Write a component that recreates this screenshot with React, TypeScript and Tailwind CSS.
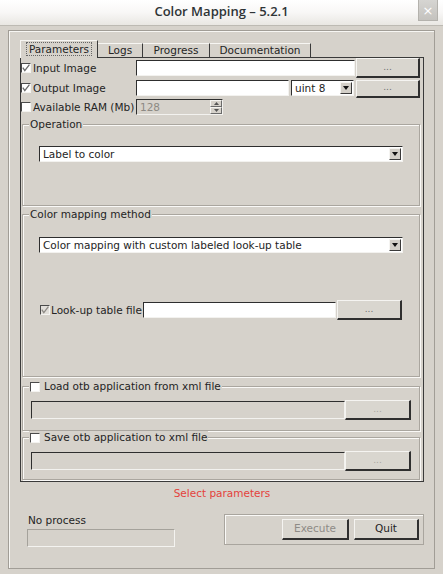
import React from "react";

type Kids = { children?: React.ReactNode; className?: string };

const Check = ({ checked = false, dim = false }: { checked?: boolean; dim?: boolean }) => (
  <span
    className={`flex h-[10px] w-[10px] shrink-0 items-center justify-center border border-b-[#f4f3f0] border-l-[#4a4a4a] border-r-[#f4f3f0] border-t-[#4a4a4a] ${
      dim ? "bg-[#e2dfda]" : "bg-white"
    }`}
  >
    {checked && (
      <svg width="8" height="8" viewBox="0 0 8 8">
        <path
          d="M0.8 3.6 L2.8 6.6 L7.4 0.6"
          fill="none"
          stroke={dim ? "#8f8c87" : "#6a6a6a"}
          strokeWidth="1.3"
        />
      </svg>
    )}
  </span>
);

const Field = ({ className = "", disabled = false }: { className?: string; disabled?: boolean }) => (
  <div
    className={`shrink-0 border border-b-[#f3f2ef] border-l-[#2e2e2e] border-r-[#f3f2ef] border-t-[#2e2e2e] ${
      disabled ? "bg-[#d6d2cb]" : "bg-white"
    } ${className}`}
  />
);

const Btn = ({ label, className = "", muted = false }: { label: string; className?: string; muted?: boolean }) => (
  <div
    className={`flex shrink-0 items-center justify-center border-b-2 border-l border-r-2 border-t border-b-[#2f2f2f] border-l-[#f5f4f1] border-r-[#2f2f2f] border-t-[#f5f4f1] bg-[#d9d6cf] ${
      muted ? "text-[#8e8b86]" : "text-[#1f1f1f]"
    } ${className}`}
  >
    {label}
  </div>
);

const Dots = ({ className = "", faint = false }: { className?: string; faint?: boolean }) => (
  <div
    className={`flex shrink-0 items-end justify-center border-b-2 border-l border-r-2 border-t border-b-[#2f2f2f] border-l-[#f5f4f1] border-r-[#2f2f2f] border-t-[#f5f4f1] bg-[#d9d6cf] pb-[4px] text-[9px] leading-[9px] ${
      faint ? "text-[#a9a6a0]" : "text-[#6f6f6f]"
    } ${className}`}
  >
    ...
  </div>
);

const Arrow = () => (
  <span className="flex h-[12px] w-[12px] shrink-0 items-center justify-center border border-b-[#3a3a3a] border-l-[#f5f4f1] border-r-[#3a3a3a] border-t-[#f5f4f1] bg-[#d3cfc8]">
    <svg width="6" height="4" viewBox="0 0 6 4">
      <path d="M0 0 H6 L3 4 Z" fill="#111" />
    </svg>
  </span>
);

const Select = ({ value, className = "" }: { value: string; className?: string }) => (
  <div
    className={`flex shrink-0 items-center border border-b-[#f3f2ef] border-l-[#2e2e2e] border-r-[#f3f2ef] border-t-[#2e2e2e] bg-white pl-[3px] pr-[1px] ${className}`}
  >
    <span className="flex-1 truncate leading-[13px]">{value}</span>
    <Arrow />
  </div>
);

const Group = ({ title, className = "", children }: Kids & { title: React.ReactNode }) => (
  <div
    className={`relative shrink-0 border border-[#aaa69f] shadow-[inset_1px_1px_0_#faf9f7,1px_1px_0_#faf9f7] ${className}`}
  >
    <div className="absolute -top-[7px] left-[6px] flex items-center gap-[4px] bg-[#d6d2cb] px-[1px] leading-[13px]">
      {title}
    </div>
    {children}
  </div>
);

const Label = ({ children, className = "" }: Kids) => (
  <span className={`whitespace-nowrap leading-[13px] ${className}`}>{children}</span>
);

export default function App() {
  return (
    <div className="flex h-[574px] w-[443px] flex-col overflow-hidden bg-[#d6d2cb] font-['DejaVu_Sans',sans-serif] text-[10.5px] text-[#242424]">
      {/* title bar */}
      <div className="flex h-[26px] shrink-0 items-start border-b border-[#bdbab3] bg-gradient-to-b from-white via-[#f8f7f6] to-[#e9e7e3]">
        <div className="w-[25px]" />
        <div className="flex h-[24px] flex-1 items-center justify-center font-['Open_Sans',sans-serif] text-[13px] font-semibold text-[#2e3436]">
          Color Mapping – 5.2.1
        </div>
        <div className="mr-[5px] flex h-[21px] w-[20px] items-center justify-center border border-t-0 border-[#b4b2ad] bg-gradient-to-b from-[#d6d5d2] to-[#c4c2be] text-[13px] leading-none text-white">
          ×
        </div>
      </div>

      {/* window frame */}
      <div className="ml-[8px] mt-[4px] flex h-[539px] w-[427px] flex-col border border-[#a19d96] pl-[11px] pr-[10px] pt-[9px] shadow-[inset_1px_1px_0_#f7f6f3]">
        {/* tabs */}
        <div className="relative z-10 -mb-px flex h-[18px] items-end">
          <div className="flex h-[18px] w-[78px] items-center justify-center border-l border-r border-t border-l-[#f7f6f3] border-r-[#3a3a3a] border-t-[#f7f6f3] bg-[#d6d2cb] pb-px">
            <span className="px-[2px] leading-[12px] outline-1 outline-dotted outline-[#666]">Parameters</span>
          </div>
          <div className="flex h-[15px] w-[45px] items-center justify-center border-r border-t border-r-[#3a3a3a] border-t-[#f7f6f3]">
            Logs
          </div>
          <div className="flex h-[15px] w-[67px] items-center justify-center border-r border-t border-r-[#3a3a3a] border-t-[#f7f6f3]">
            Progress
          </div>
          <div className="flex h-[15px] w-[101px] items-center justify-center border-r border-t border-r-[#3a3a3a] border-t-[#f7f6f3]">
            Documentation
          </div>
        </div>

        {/* tab pane */}
        <div className="flex h-[425px] w-[404px] flex-col border border-[#3a3a3a]">
          <div className="flex h-[20px] items-center">
            <div className="flex w-[115px] items-center gap-[2px]">
              <Check checked />
              <Label>Input Image</Label>
            </div>
            <Field className="h-[16px] w-[219px]" />
            <Dots className="ml-[1px] h-[20px] w-[64px]" />
          </div>

          <div className="mt-[2px] flex h-[18px] items-start">
            <div className="flex h-[16px] w-[115px] items-center gap-[2px]">
              <Check checked />
              <Label>Output Image</Label>
            </div>
            <Field className="h-[16px] w-[153px]" />
            <Select value="uint 8" className="ml-[2px] h-[16px] w-[63px]" />
            <Dots className="ml-[2px] h-[18px] w-[64px]" />
          </div>

          <div className="mt-[1px] flex h-[16px] items-center">
            <div className="flex w-[115px] items-center gap-[2px]">
              <Check />
              <Label>Available RAM (Mb)</Label>
            </div>
            <div className="flex h-[16px] w-[87px] items-center border border-b-[#f3f2ef] border-l-[#2e2e2e] border-r-[#f3f2ef] border-t-[#2e2e2e] pl-[3px]">
              <span className="flex-1 leading-[13px] text-[#8c8983]">128</span>
              <div className="flex h-[14px] w-[12px] flex-col">
                <span className="flex h-[7px] items-center justify-center border border-b-[#6a6a6a] border-l-[#f5f4f1] border-r-[#6a6a6a] border-t-[#f5f4f1]">
                  <svg width="5" height="3" viewBox="0 0 5 3">
                    <path d="M0 3 H5 L2.5 0 Z" fill="#555" />
                  </svg>
                </span>
                <span className="flex h-[7px] items-center justify-center border border-b-[#6a6a6a] border-l-[#f5f4f1] border-r-[#6a6a6a] border-t-[#f5f4f1]">
                  <svg width="5" height="3" viewBox="0 0 5 3">
                    <path d="M0 0 H5 L2.5 3 Z" fill="#555" />
                  </svg>
                </span>
              </div>
            </div>
          </div>

          <Group title={<Label>Operation</Label>} className="ml-[1px] mt-[9px] h-[82px] w-[398px] pl-[16px] pt-[21px]">
            <Select value="Label to color" className="h-[16px] w-[364px]" />
          </Group>

          <Group
            title={<Label>Color mapping method</Label>}
            className="ml-[1px] mt-[8px] h-[163px] w-[398px] pl-[16px] pt-[22px]"
          >
            <Select value="Color mapping with custom labeled look-up table" className="h-[16px] w-[364px]" />
            <div className="mt-[47px] flex h-[20px] items-center">
              <div className="flex w-[104px] items-center gap-[1px] pl-[1px]">
                <Check checked dim />
                <Label>Look-up table file</Label>
              </div>
              <Field className="h-[16px] w-[193px]" />
              <Dots className="ml-[1px] h-[20px] w-[65px]" />
            </div>
          </Group>

          <Group
            title={
              <>
                <Check />
                <Label>Load otb application from xml file</Label>
              </>
            }
            className="ml-[1px] mt-[9px] flex h-[45px] w-[398px] items-start pl-[8px] pt-[13px]"
          >
            <Field disabled className="mt-[1px] h-[18px] w-[314px]" />
            <Dots faint className="h-[20px] w-[66px]" />
          </Group>

          <Group
            title={
              <>
                <Check />
                <Label>Save otb application to xml file</Label>
              </>
            }
            className="ml-[1px] mt-[6px] flex h-[43px] w-[398px] items-start pl-[8px] pt-[13px]"
          >
            <Field disabled className="mt-[1px] h-[18px] w-[314px]" />
            <Dots faint className="h-[20px] w-[66px]" />
          </Group>
        </div>

        {/* status */}
        <div className="mt-[5px] h-[13px] text-center leading-[13px] text-[#e4423c]">Select parameters</div>

        <div className="mt-[14px] flex items-start">
          <div className="ml-[7px] flex w-[148px] flex-col">
            <Label className="ml-[1px]">No process</Label>
            <div className="mt-[2px] h-[18px] border border-[#a5a29b] border-b-[#f4f3f0] border-r-[#f4f3f0]" />
          </div>
          <div className="ml-auto flex h-[31px] w-[200px] items-start justify-end gap-[5px] border border-[#a9a59e] pr-[4px] pt-[4px] shadow-[inset_1px_1px_0_#faf9f7]">
            <Btn
              label="Execute"
              muted
              className="h-[21px] w-[67px] border-l-[#2f2f2f] border-t-[#2f2f2f]"
            />
            <Btn label="Quit" className="h-[21px] w-[65px]" />
          </div>
        </div>
      </div>
    </div>
  );
}
